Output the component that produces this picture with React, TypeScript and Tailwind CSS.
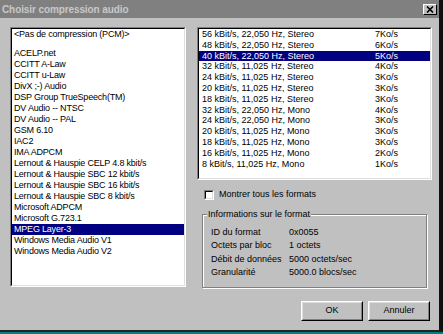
const codecs = [
  'ACELP.net',
  'CCITT A-Law',
  'CCITT u-Law',
  'DivX ;-) Audio',
  'DSP Group TrueSpeech(TM)',
  'DV Audio -- NTSC',
  'DV Audio -- PAL',
  'GSM 6.10',
  'IAC2',
  'IMA ADPCM',
  'Lernout & Hauspie CELP 4.8 kbit/s',
  'Lernout & Hauspie SBC 12 kbit/s',
  'Lernout & Hauspie SBC 16 kbit/s',
  'Lernout & Hauspie SBC 8 kbit/s',
  'Microsoft ADPCM',
  'Microsoft G.723.1',
  'MPEG Layer-3',
  'Windows Media Audio V1',
  'Windows Media Audio V2',
]

const formats = [
  ['56 kBit/s, 22,050 Hz, Stereo', '7Ko/s'],
  ['48 kBit/s, 22,050 Hz, Stereo', '6Ko/s'],
  ['40 kBit/s, 22,050 Hz, Stereo', '5Ko/s'],
  ['32 kBit/s, 11,025 Hz, Stereo', '4Ko/s'],
  ['24 kBit/s, 11,025 Hz, Stereo', '3Ko/s'],
  ['20 kBit/s, 11,025 Hz, Stereo', '3Ko/s'],
  ['18 kBit/s, 11,025 Hz, Stereo', '3Ko/s'],
  ['32 kBit/s, 22,050 Hz, Mono', '4Ko/s'],
  ['24 kBit/s, 22,050 Hz, Mono', '3Ko/s'],
  ['20 kBit/s, 11,025 Hz, Mono', '3Ko/s'],
  ['18 kBit/s, 11,025 Hz, Mono', '3Ko/s'],
  ['16 kBit/s, 11,025 Hz, Mono', '2Ko/s'],
  ['8 kBit/s, 11,025 Hz, Mono', '1Ko/s'],
]

const info = [
  ['ID du format', '0x0055'],
  ['Octets par bloc', '1 octets'],
  ['Débit de données', '5000 octets/sec'],
  ['Granularité', '5000.0 blocs/sec'],
]

function Sunken({ className, children }: { className: string; children: React.ReactNode }) {
  return (
    <div className={`border border-t-[#808080] border-l-[#808080] border-b-white border-r-white ${className}`}>
      <div className="h-full border border-t-black border-l-black border-b-[#dfdfdf] border-r-[#dfdfdf] bg-white overflow-hidden">
        {children}
      </div>
    </div>
  )
}

function Button({ label }: { label: string }) {
  return (
    <div className="w-[62px] h-[20px] border border-t-white border-l-white border-b-black border-r-black">
      <div className="h-full flex items-center justify-center border border-t-[#dfdfdf] border-l-[#dfdfdf] border-b-[#808080] border-r-[#808080]">
        {label}
      </div>
    </div>
  )
}

export default function App() {
  return (
    <div className="w-[443px] h-[334px] bg-[#008080] overflow-hidden font-['Liberation_Sans',Arial,sans-serif] text-[9px] text-black">
      <div className="w-[443px] h-[332px] bg-[#c0c0c0] border-r-[4px] border-r-[#111] border-b-2 border-b-[#222] flex flex-col">
        {/* title bar */}
        <div className="h-[18px] bg-[#808080] flex items-center justify-between pl-[2px] pr-[2px]">
          <span className="text-[10px] font-bold text-[#c8c8c8] tracking-[-0.1px]">Choisir compression audio</span>
          <div className="w-[14px] h-[11px] bg-[#c0c0c0] border border-t-white border-l-white border-b-black border-r-black flex items-center justify-center">
            <svg width="8" height="7" viewBox="0 0 8 7">
              <path d="M1 0.5 L7 6.5 M7 0.5 L1 6.5" stroke="#000" strokeWidth="1.6" />
            </svg>
          </div>
        </div>

        <div className="flex pt-[9px] pl-[10px] gap-[11px]">
          {/* codec list */}
          <Sunken className="w-[176px] h-[260px]">
            <div className="h-[11px] leading-[11px] px-[2px] tracking-[-0.2px]">&lt;Pas de compression (PCM)&gt;</div>
            <div className="h-[8px]" />
            {codecs.map((c) => (
              <div
                key={c}
                className={`h-[11px] leading-[11px] px-[2px] tracking-[-0.2px] whitespace-nowrap ${
                  c === 'MPEG Layer-3' ? 'bg-[#000080] text-white' : ''
                }`}
              >
                {c}
              </div>
            ))}
          </Sunken>

          <div className="w-[235px] flex flex-col">
            {/* formats list */}
            <Sunken className="h-[153px]">
              {formats.map(([f, r], i) => (
                <div
                  key={f}
                  className={`h-[10.8px] leading-[10.8px] pl-[3px] grid grid-cols-[173px_1fr] whitespace-nowrap ${
                    i === 2 ? 'bg-[#000080] text-white' : ''
                  }`}
                >
                  <span>{f}</span>
                  <span>{r}</span>
                </div>
              ))}
            </Sunken>

            <div className="flex items-center gap-[5px] mt-[10px] pl-[7px] h-[10px]">
              <div className="w-[10px] h-[10px] border border-t-[#808080] border-l-[#808080] border-b-white border-r-white">
                <div className="h-full border border-t-black border-l-black border-b-[#dfdfdf] border-r-[#dfdfdf] bg-white" />
              </div>
              <span>Montrer tous les formats</span>
            </div>

            {/* group box */}
            <div className="relative mt-[14px] ml-[5px] w-[225px] h-[74px] border border-[#808080] shadow-[inset_1px_1px_0_#fff,1px_1px_0_#fff]">
              <span className="absolute -top-[6px] left-[4px] bg-[#c0c0c0] px-[1px] leading-[11px]">
                Informations sur le format
              </span>
              <div className="pt-[11px] pl-[8px]">
                {info.map(([k, v]) => (
                  <div key={k} className="grid grid-cols-[78px_1fr] h-[13.4px] leading-[13.4px]">
                    <span>{k}</span>
                    <span>{v}</span>
                  </div>
                ))}
              </div>
            </div>

            <div className="flex justify-end gap-[5px] mt-[13px] pr-[2px]">
              <Button label="OK" />
              <Button label="Annuler" />
            </div>
          </div>
        </div>
      </div>
    </div>
  )
}
